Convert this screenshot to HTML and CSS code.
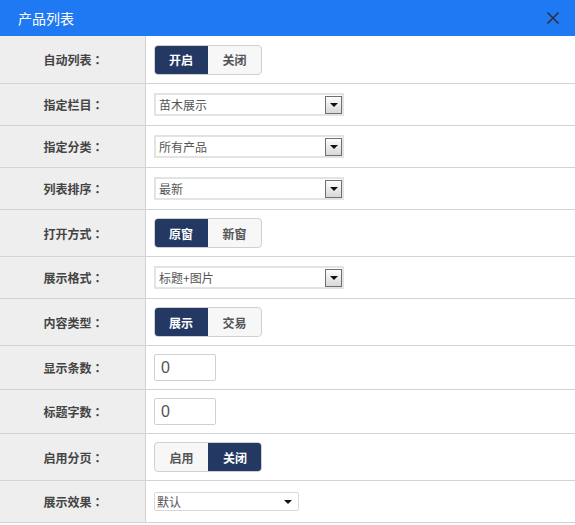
FILE: index.html
```html
<!DOCTYPE html>
<html lang="zh">
<head>
<meta charset="utf-8">
<title>产品列表</title>
<link rel="stylesheet" href="styles.css">
</head>
<body>
<div class="dialog">
  <div class="dialog-header">
    <span class="dialog-title">产品列表</span>
    <span class="dialog-close">
      <svg width="14" height="14" viewBox="0 0 14 14"><path d="M1.5 1.5 L12.5 12.5 M12.5 1.5 L1.5 12.5" stroke="#2b2f3a" stroke-width="1.6" fill="none"/></svg>
    </span>
  </div>
  <div class="form">
    <div class="row row-toggle row-first">
      <div class="label">自动列表<span class="colon">：</span></div>
      <div class="field">
        <div class="toggle"><span class="opt on">开启</span><span class="opt">关闭</span></div>
      </div>
    </div>
    <div class="row row-select">
      <div class="label">指定栏目<span class="colon">：</span></div>
      <div class="field">
        <div class="select"><span class="select-text">苗木展示</span><span class="select-btn"><i class="tri"></i></span></div>
      </div>
    </div>
    <div class="row row-select">
      <div class="label">指定分类<span class="colon">：</span></div>
      <div class="field">
        <div class="select"><span class="select-text">所有产品</span><span class="select-btn"><i class="tri"></i></span></div>
      </div>
    </div>
    <div class="row row-select">
      <div class="label">列表排序<span class="colon">：</span></div>
      <div class="field">
        <div class="select"><span class="select-text">最新</span><span class="select-btn"><i class="tri"></i></span></div>
      </div>
    </div>
    <div class="row row-toggle">
      <div class="label">打开方式<span class="colon">：</span></div>
      <div class="field">
        <div class="toggle"><span class="opt on">原窗</span><span class="opt">新窗</span></div>
      </div>
    </div>
    <div class="row row-select">
      <div class="label">展示格式<span class="colon">：</span></div>
      <div class="field">
        <div class="select"><span class="select-text">标题+图片</span><span class="select-btn"><i class="tri"></i></span></div>
      </div>
    </div>
    <div class="row row-toggle">
      <div class="label">内容类型<span class="colon">：</span></div>
      <div class="field">
        <div class="toggle"><span class="opt on">展示</span><span class="opt">交易</span></div>
      </div>
    </div>
    <div class="row row-input">
      <div class="label">显示条数<span class="colon">：</span></div>
      <div class="field"><div class="num-input">0</div></div>
    </div>
    <div class="row row-input">
      <div class="label">标题字数<span class="colon">：</span></div>
      <div class="field"><div class="num-input">0</div></div>
    </div>
    <div class="row row-toggle">
      <div class="label">启用分页<span class="colon">：</span></div>
      <div class="field">
        <div class="toggle"><span class="opt">启用</span><span class="opt on">关闭</span></div>
      </div>
    </div>
    <div class="row row-select">
      <div class="label">展示效果<span class="colon">：</span></div>
      <div class="field">
        <div class="select-flat"><span class="select-text">默认</span><i class="tri"></i></div>
      </div>
    </div>
  </div>
</div>
</body>
</html>
```
FILE: styles.css
```css
* { box-sizing: border-box; }
body {
  margin: 0;
  background: #fff;
  font-family: "Noto Sans CJK SC", "Liberation Sans", sans-serif;
  font-size: 12px;
  color: #333;
}
.dialog { width: 575px; }
.dialog-header {
  height: 36px;
  background: #1f79f3;
  display: flex;
  align-items: center;
  justify-content: space-between;
  padding: 0 15px 0 18px;
}
.dialog-title {
  color: #fff;
  font-size: 14px;
}
.dialog-close { display: flex; align-items: center; }

.row {
  display: flex;
  border-bottom: 1px solid #d3d3d3;
}
.row-toggle { height: 47px; }
.row-first { height: 48px; }
.row-select { height: 42px; }
.row-input { height: 44px; }

.label {
  width: 146px;
  flex: none;
  background: #eeeeee;
  border-right: 1px solid #d3d3d3;
  display: flex;
  align-items: center;
  justify-content: center;
  font-weight: bold;
  color: #444;
  padding-left: 2px;
}
.colon {
  font-family: "Noto Sans CJK TC", "Noto Sans CJK SC", sans-serif;
}
.field {
  flex: 1;
  display: flex;
  align-items: center;
  padding-left: 8px;
}

.toggle {
  display: flex;
  height: 30px;
  border: 1px solid #d0d0d0;
  border-radius: 4px;
  background: #f7f7f7;
  overflow: hidden;
}
.opt {
  width: 53px;
  display: flex;
  align-items: center;
  justify-content: center;
  color: #555;
  font-weight: bold;
}
.opt.on {
  background: #233863;
  color: #fff;
}
.toggle .opt:first-child.on { margin: -1px 0 -1px -1px; width: 54px; }
.toggle .opt:last-child.on { margin: -1px -1px -1px 0; width: 54px; }

.select {
  width: 190px;
  height: 23px;
  border: 2px solid #e3e3e3;
  display: flex;
  align-items: center;
  justify-content: space-between;
  background: #fff;
  padding-left: 3px;
}
.select-text { color: #555; }
.select-btn {
  width: 17px;
  height: 18px;
  border: 1px solid #707070;
  background: linear-gradient(#fdfdfd, #d8d8d8);
  display: flex;
  align-items: center;
  justify-content: center;
}
.tri {
  width: 0;
  height: 0;
  border-left: 4px solid transparent;
  border-right: 4px solid transparent;
  border-top: 4px solid #111;
  margin-top: 1px;
}

.num-input {
  width: 62px;
  height: 27px;
  border: 1px solid #cdd0d6;
  border-radius: 2px;
  display: flex;
  align-items: center;
  padding-left: 6px;
  font-size: 16px;
  color: #555;
  font-family: "Liberation Sans", sans-serif;
}

.select-flat {
  width: 145px;
  height: 19px;
  border: 1px solid #d5dae2;
  border-radius: 2px;
  display: flex;
  align-items: center;
  justify-content: space-between;
  padding: 0 6px 0 2px;
  color: #333;
}
```
